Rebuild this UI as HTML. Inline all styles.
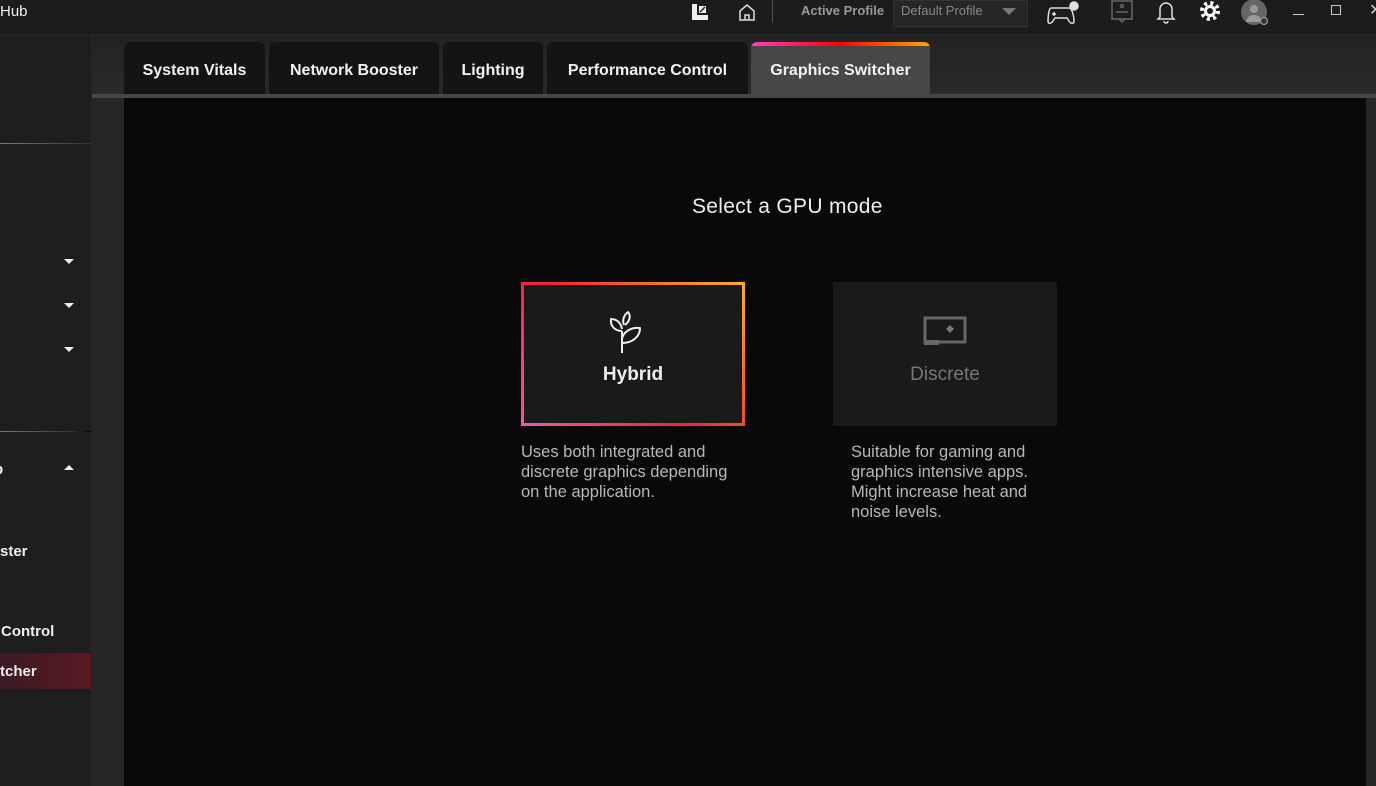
<!DOCTYPE html>
<html><head><meta charset="utf-8"><style>
*{margin:0;padding:0;box-sizing:border-box}
body{width:1376px;height:786px;background:#262626;font-family:"Liberation Sans",sans-serif;position:relative;overflow:hidden;color:#fff}
.abs{position:absolute}
.top{left:0;top:0;width:1376px;height:34px;background:#1c1c1c}
.side{left:0;top:35px;width:91px;height:751px;background:#1e1e1e}
.tab{position:absolute;top:42px;height:52px;background:#141414;border-radius:6px 6px 0 0;font-weight:bold;font-size:16px;line-height:58px;text-align:center;color:#f2f2f2}
.st{font-weight:bold;font-size:15px;color:#eee;position:absolute}
.caret{position:absolute;left:64px;width:0;height:0;border-left:5px solid transparent;border-right:5px solid transparent}
.desc{position:absolute;font-size:16px;line-height:20px;color:#b8b8b8}
</style></head><body>
<div class="abs top"></div>
<div class="abs" style="left:0;top:3px;font-size:15px;color:#eee">Hub</div>
<svg class="abs" style="left:690px;top:2px" width="20" height="20" viewBox="0 0 20 20"><rect x="2" y="2" width="16" height="16" fill="#eee"/><rect x="7" y="2" width="11" height="11" fill="#1c1c1c"/><rect x="9" y="4" width="7" height="7" fill="#eee"/><path d="M10 10l5-5" stroke="#1c1c1c" stroke-width="1.5"/></svg>
<svg class="abs" style="left:737px;top:2px" width="20" height="20" viewBox="0 0 20 20" fill="none" stroke="#ddd" stroke-width="1.5"><path d="M3 9l7-6 7 6v9H3z"/><path d="M8 18v-5h4v5"/></svg>
<div class="abs" style="left:772px;top:0;width:1px;height:22px;background:#555"></div>
<div class="abs" style="left:801px;top:3px;font-size:13px;font-weight:bold;color:#999">Active Profile</div>
<div class="abs" style="left:893px;top:0;width:135px;height:27px;background:#262626;border:1px solid #333"></div>
<div class="abs" style="left:901px;top:3px;font-size:13px;color:#888">Default Profile</div>
<div class="abs" style="left:1002px;top:8px;border-left:7px solid transparent;border-right:7px solid transparent;border-top:7px solid #777"></div>
<svg class="abs" style="left:1045px;top:0" width="38" height="26" viewBox="0 0 38 26" fill="none" stroke="#ddd" stroke-width="1.5"><path d="M6 8h18c3 0 5 8 5 13 0 3-3 3-5 0l-2-3H10l-2 3c-2 3-5 3-5 0 0-5 1-13 3-13z"/><path d="M9 12v4M7 14h4"/><circle cx="29" cy="6" r="4" fill="#ddd"/></svg>
<svg class="abs" style="left:1110px;top:0" width="24" height="24" viewBox="0 0 24 24" fill="none" stroke="#666" stroke-width="1.5"><rect x="2" y="1" width="20" height="18"/><path d="M6 12h12M9 19l3 3 3-3"/><circle cx="12" cy="6" r="1.5"/></svg>
<svg class="abs" style="left:1155px;top:0" width="22" height="24" viewBox="0 0 22 24" fill="none" stroke="#ddd" stroke-width="1.5"><path d="M5 17V9a6 6 0 0 1 12 0v8l2 2H3z"/><path d="M9 21a2 2 0 0 0 4 0"/></svg>
<svg class="abs" style="left:1199px;top:0" width="22" height="22" viewBox="0 0 22 22"><circle cx="11" cy="11" r="8" fill="none" stroke="#fff" stroke-width="4" stroke-dasharray="3 3.3"/><circle cx="11" cy="11" r="6" fill="#fff"/><circle cx="11" cy="11" r="3" fill="#1c1c1c"/></svg>
<svg class="abs" style="left:1240px;top:0" width="30" height="26" viewBox="0 0 30 26"><circle cx="14" cy="12" r="13" fill="#666"/><circle cx="14" cy="9" r="4" fill="#999"/><path d="M6 22c1-5 4-7 8-7s7 2 8 7" fill="#999"/><circle cx="24" cy="21" r="3.5" fill="#333" stroke="#999" stroke-width="1.3"/></svg>
<div class="abs" style="left:1293px;top:14px;width:11px;height:1px;background:#ccc"></div>
<div class="abs" style="left:1331px;top:5px;width:10px;height:10px;border:1px solid #ccc"></div>
<div class="abs" style="left:1369px;top:0px;font-size:16px;color:#ccc">✕</div>

<div class="abs side"></div>
<div class="abs" style="left:0;top:143px;width:91px;height:1px;background:linear-gradient(90deg,#777,#333)"></div>
<div class="abs" style="left:0;top:431px;width:91px;height:1px;background:linear-gradient(90deg,#777,#333 80%,#000)"></div>
<div class="caret" style="top:259px;border-top:5px solid #eee"></div>
<div class="caret" style="top:303px;border-top:5px solid #eee"></div>
<div class="caret" style="top:347px;border-top:5px solid #eee"></div>
<div class="caret" style="top:465px;border-bottom:5px solid #eee"></div>
<div class="st" style="left:-6px;top:461px">p</div>
<div class="st" style="left:0;top:543px">ster</div>
<div class="st" style="left:1px;top:623px">Control</div>
<div class="abs" style="left:0;top:653px;width:91px;height:36px;background:linear-gradient(90deg,#3a1a24,#5a1a20)"></div>
<div class="st" style="left:0;top:663px">tcher</div>

<div class="abs" style="left:92px;top:35px;width:1284px;height:60px;background:linear-gradient(180deg,#222,#2a2a2a)"></div>
<div class="tab" style="left:124px;width:141px">System Vitals</div>
<div class="tab" style="left:269px;width:170px">Network Booster</div>
<div class="tab" style="left:443px;width:100px">Lighting</div>
<div class="tab" style="left:547px;width:201px">Performance Control</div>
<div class="tab" style="left:751px;width:179px;background:#474747;overflow:hidden">Graphics Switcher<div class="abs" style="left:0;top:0;width:179px;height:4px;background:linear-gradient(90deg,#ff3fc0,#ff0000 50%,#ffaa00)"></div></div>
<div class="abs" style="left:92px;top:94px;width:1284px;height:4px;background:#474747"></div>
<div class="abs" style="left:92px;top:98px;width:32px;height:688px;background:#262626"></div>
<div class="abs" style="left:124px;top:98px;width:1242px;height:688px;background:#090909"></div>
<div class="abs" style="left:1366px;top:98px;width:10px;height:688px;background:#262626"></div>

<div class="abs" style="left:692px;top:195px;font-size:21px;color:#f0f0f0;letter-spacing:0.3px">Select a GPU mode</div>
<div class="abs" style="left:521px;top:282px;width:224px;height:144px;background:linear-gradient(45deg,#f05aa0,#f0203c 45%,#ffb020);padding:3px"><div style="width:100%;height:100%;background:#1a1a1a"></div></div>
<svg class="abs" style="left:609px;top:310px" width="40" height="44" viewBox="0 0 40 44" fill="none" stroke="#eee" stroke-width="2" stroke-linejoin="round"><path d="M13 43V21"/><path d="M13 33C23 33 31 27 31 18C22 17 14 22 13 29"/><path d="M13 21C6 21 1 16 2 9C8 9 12 13 13 19"/><path d="M15 15C13 10 15 5 19 2C22 6 21 11 16 15"/></svg>
<div class="abs" style="left:521px;top:364px;width:224px;text-align:center;font-size:19px;font-weight:bold;color:#eee">Hybrid</div>
<div class="abs" style="left:833px;top:282px;width:224px;height:144px;background:#1a1a1a"></div>
<svg class="abs" style="left:922px;top:316px" width="46" height="32" viewBox="0 0 46 32"><rect x="3" y="2" width="40" height="24" fill="none" stroke="#666" stroke-width="3"/><rect x="2" y="24" width="15" height="5" fill="#666"/><path d="M28 9l4 4-4 4-4-4z" fill="#777"/></svg>
<div class="abs" style="left:833px;top:364px;width:224px;text-align:center;font-size:19px;color:#777">Discrete</div>
<div class="desc" style="left:521px;top:442px;font-size:16.5px">Uses both integrated and<br>discrete graphics depending<br>on the application.</div>
<div class="desc" style="left:851px;top:442px;font-size:16.5px">Suitable for gaming and<br>graphics intensive apps.<br>Might increase heat and<br>noise levels.</div>
</body></html>
